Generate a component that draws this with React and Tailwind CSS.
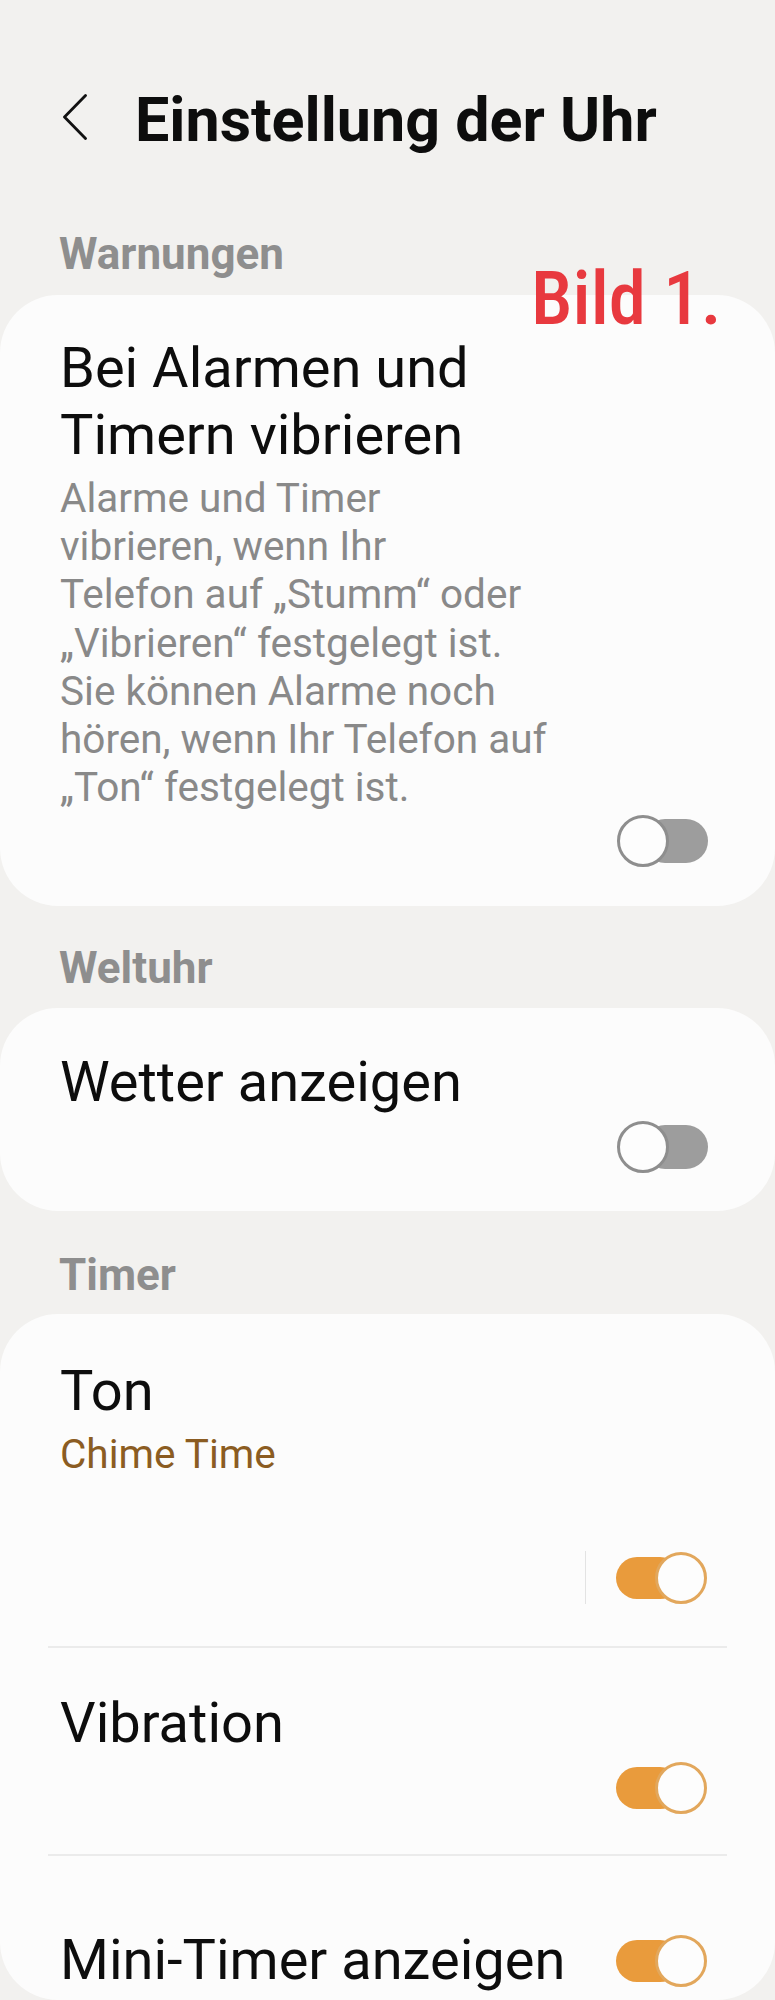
function Toggle({ on }) {
  if (on) {
    return (
      <div className="relative h-[52px] w-[91px] shrink-0">
        <div className="absolute bottom-[5px] left-0 right-[26px] top-[5px] rounded-full bg-[#e99b3c]" />
        <div className="absolute right-0 top-0 h-[52px] w-[52px] rounded-full border-[3px] border-[#e2a75c] bg-[#fdfdfd]" />
      </div>
    );
  }
  return (
    <div className="relative h-[52px] w-[91px] shrink-0">
      <div className="absolute bottom-[4px] left-[26px] right-0 top-[4px] rounded-full bg-[#9d9d9d]" />
      <div className="absolute left-0 top-0 h-[52px] w-[52px] rounded-full border-[3px] border-[#8e8e8e] bg-[#fdfdfd]" />
    </div>
  );
}

function SectionLabel({ children, className = "" }) {
  return (
    <div className={`px-[59px] text-[44px] font-bold leading-[48px] text-[#8e8e8e] ${className}`}>
      {children}
    </div>
  );
}

function Title({ children }) {
  return <div className="text-[56px] leading-[67px] text-[#0d0d0d]">{children}</div>;
}

export default function App() {
  return (
    <div
      className="relative min-h-[2000px] overflow-hidden bg-[#f2f1ef] pb-[10px]"
      style={{ fontFamily: "Roboto, sans-serif" }}
    >
      {/* header */}
      <div className="flex items-center pt-[84px]">
        <svg width="24" height="46" viewBox="0 0 24 46" className="ml-[63px] mt-[-6px]" fill="none">
          <polyline points="22.5,1.5 1.5,23 22.5,44.5" stroke="#111" strokeWidth="2.8" strokeLinecap="round" strokeLinejoin="round" />
        </svg>
        <h1 className="ml-[48px] text-[61px] font-bold leading-[72px] text-[#0d0d0d]">Einstellung der Uhr</h1>
      </div>

      <div
        className="absolute left-[531px] top-[254px] text-[75px] font-medium leading-[88px] text-[#e8393f]"
        style={{ fontFamily: '"Roboto Condensed", sans-serif' }}
      >
        Bild 1.
      </div>

      <SectionLabel className="mt-[74px]">Warnungen</SectionLabel>

      {/* card 1 */}
      <div className="mt-[17px] rounded-[58px] bg-[#fcfcfc] pb-[39px] pl-[60px] pr-[67px] pt-[40px]">
        <Title>
          Bei Alarmen und
          <br />
          Timern vibrieren
        </Title>
        <p className="mt-[5px] text-[40.5px] leading-[48.2px] text-[#898989]">
          Alarme und Timer
          <br />
          vibrieren, wenn Ihr
          <br />
          Telefon auf „Stumm“ oder
          <br />
          „Vibrieren“ festgelegt ist.
          <br />
          Sie können Alarme noch
          <br />
          hören, wenn Ihr Telefon auf
          <br />
          „Ton“ festgelegt ist.
        </p>
        <div className="mt-[4px] flex justify-end">
          <Toggle on={false} />
        </div>
      </div>

      <SectionLabel className="mt-[38px]">Weltuhr</SectionLabel>

      {/* card 2 */}
      <div className="mt-[16px] rounded-[58px] bg-[#fcfcfc] pb-[38px] pl-[60px] pr-[67px] pt-[41px]">
        <Title>Wetter anzeigen</Title>
        <div className="mt-[5px] flex justify-end">
          <Toggle on={false} />
        </div>
      </div>

      <SectionLabel className="mt-[40px]">Timer</SectionLabel>

      {/* card 3 */}
      <div className="mt-[15px] rounded-[58px] bg-[#fcfcfc] pb-[6px] pt-[44px]">
        <div className="pl-[60px] pr-[68px]">
          <Title>Ton</Title>
          <div className="mt-[6px] text-[40.5px] leading-[46px] text-[#8b5c22]">Chime Time</div>
          <div className="mt-[74px] flex items-center justify-end gap-[30px]">
            <div className="h-[53px] w-[1.5px] bg-[#e3e3e3]" />
            <Toggle on />
          </div>
        </div>

        <div className="mx-[48px] mt-[42px] h-[2px] bg-[#ebebeb]" />

        <div className="pl-[60px] pr-[68px] pt-[42px]">
          <Title>Vibration</Title>
          <div className="mt-[5px] flex justify-end">
            <Toggle on />
          </div>
        </div>

        <div className="mx-[48px] mt-[40px] h-[2px] bg-[#ebebeb]" />

        <div className="flex items-center justify-between pl-[60px] pr-[68px] pt-[71px]">
          <Title>Mini-Timer anzeigen</Title>
          <Toggle on />
        </div>
      </div>
    </div>
  );
}
